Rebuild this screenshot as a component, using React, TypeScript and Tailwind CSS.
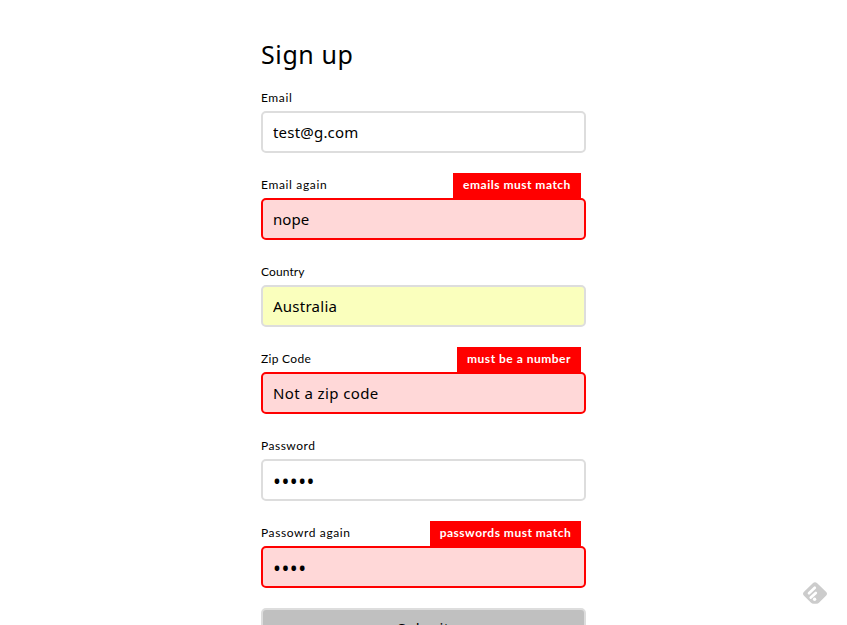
type FieldProps = {
  label: string;
  value: string;
  type?: string;
  error?: string;
  tone?: string;
  labelClass?: string;
  inputClass?: string;
  errorClass?: string;
};

function Field({ label, value, type = "text", error, tone = "border-[#dddddd] bg-white", labelClass = "", inputClass = "", errorClass = "" }: FieldProps) {
  return (
    <div className="mb-5">
      <div className="flex h-[25px] items-start justify-between pr-[5px]">
        <label className={`pt-[2px] font-['Lato',sans-serif] text-[12px] leading-[19px] whitespace-nowrap ${labelClass}`}>{label}</label>
        {error && (
          <span className={`flex h-[25px] items-start justify-center bg-[#ff0000] pt-[2px] font-['Lato',sans-serif] text-[12px] leading-[19px] font-bold whitespace-nowrap text-white ${errorClass}`}>{error}</span>
        )}
      </div>
      <input
        type={type}
        defaultValue={value}
        className={`block h-[42px] w-full rounded-[5px] border-2 px-2.5 text-black outline-none ${error ? "border-[#ff0000] bg-[#ffd8d8]" : tone} ${inputClass}`}
      />
    </div>
  );
}

function FeedlyMark() {
  return (
    <svg className="fixed top-[581px] left-[802px] h-[25px] w-[26px]" viewBox="0 0 26 25" fill="none">
      <path d="M10.8 2.2Q13 .4 15.2 2.2L24 10.7Q26 12.7 24 14.7L17.2 21.6Q16 22.8 14.4 22.8H11.6Q10 22.8 8.8 21.6L2 14.7Q0 12.7 2 10.7Z" fill="#cccccc" />
      <path d="M7 12.2 12.8 6.8M8.8 16.6 13.8 12" stroke="white" strokeWidth="2.7" strokeLinecap="round" />
      <circle cx="12.6" cy="18.2" r="1.7" fill="white" />
    </svg>
  );
}

export default function App() {
  return (
    <main className="h-[625px] overflow-hidden bg-white font-['Noto_Sans',sans-serif] text-black">
      <form className="mx-auto w-[325px] pt-[36px]">
        <h1 className="mb-[14px] h-9 text-[25px] leading-9 font-normal tracking-[0.6px]">Sign up</h1>
        <Field label="Email" value="test@g.com" labelClass="tracking-[0.6px]" inputClass="text-[15px] tracking-[0.2px]" />
        <Field label="Email again" value="nope" labelClass="tracking-[0.65px]" error="emails must match" errorClass="w-[128px] tracking-[0.5px]" inputClass="text-[15px] tracking-[0.1px]" />
        <Field label="Country" value="Australia" tone="border-[#dddddd] bg-[#faffbd]" labelClass="tracking-[0.1px]" inputClass="text-[15px] tracking-[0.25px]" />
        <Field label="Zip Code" value="Not a zip code" labelClass="tracking-[0.3px]" error="must be a number" errorClass="w-[124px] tracking-[0.5px]" inputClass="text-[15px] tracking-[0.4px]" />
        <Field label="Password" value="12345" type="password" labelClass="tracking-[0.5px]" inputClass="pt-0.5 text-[21px] tracking-[0.5px]" />
        <Field label="Passowrd again" value="1234" type="password" labelClass="tracking-[0.6px]" error="passwords must match" errorClass="w-[151px] tracking-[0.5px]" inputClass="pt-0.5 text-[21px] tracking-[0.5px]" />
        <button type="button" className="block h-[42px] w-full rounded-[5px] border-2 border-[#dddddd] bg-[#c0c0c0] pb-[2px] text-[15px] tracking-[0.3px]">Submit</button>
      </form>
      <FeedlyMark />
    </main>
  );
}
